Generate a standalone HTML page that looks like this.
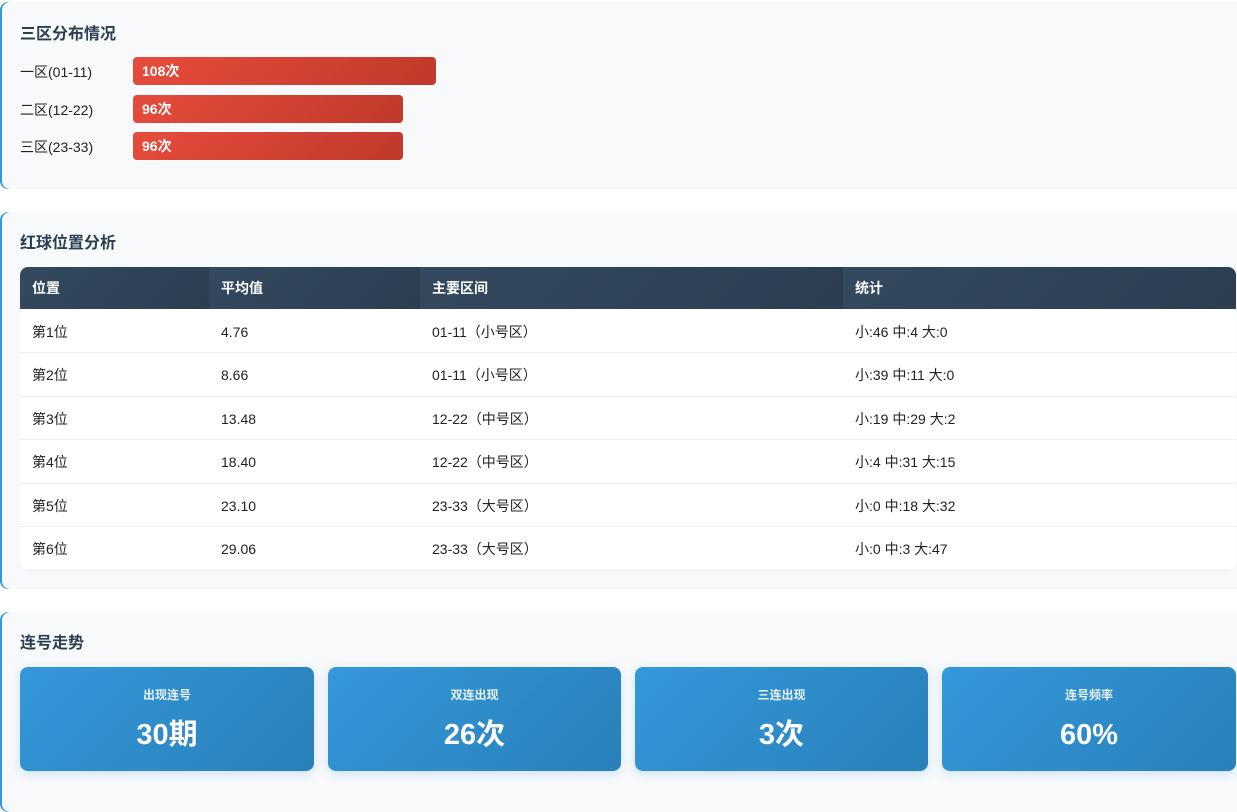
<!DOCTYPE html>
<html><head><meta charset="utf-8">
<style>
*{box-sizing:border-box;margin:0;padding:0}
html,body{width:1237px;height:781px;overflow:hidden;background:#fff;font-family:"Liberation Sans","Noto Sans CJK SC",sans-serif;color:#222}
.panel{position:absolute;left:0;width:1256px;background:#f7f9fb;box-shadow:inset 2px 0 0 #3498db;border-radius:8px}
.h{position:absolute;left:20px;font-size:16px;line-height:20px;font-weight:bold;color:#2c3e50}
.lab{position:absolute;left:20px;font-size:14px;line-height:20px;color:#222}
.bar{position:absolute;left:133px;height:28px;border-radius:4px;background:linear-gradient(135deg,#e74c3c,#c0392b);color:#fff;font-weight:bold;font-size:14px;line-height:28px;padding-left:9px}
table{position:absolute;left:20px;top:55px;width:1216px;border-collapse:collapse;background:#fff;border-radius:8px;overflow:hidden;font-size:14px}
th{height:42px;text-align:left;padding-left:12px;color:#fff;font-size:14px;background:linear-gradient(135deg,#34495e,#2c3e50)}
td{height:43.5px;padding-left:12px;padding-top:2px;border-bottom:1px solid #eceef0}
.card{position:absolute;top:55px;height:104px;border-radius:8px;background:linear-gradient(135deg,#3498db,#2980b9);color:#fff;text-align:center;box-shadow:0 3px 10px rgba(52,152,219,.2)}
.card .l{position:absolute;top:20px;width:100%;font-size:12px;line-height:16px;font-weight:bold;color:#e8f2fa}
.card .v{position:absolute;top:50px;width:100%;font-size:29px;line-height:36px;font-weight:bold}
</style></head><body>
<div class="panel" style="top:2px;height:187px">
 <div class="h" style="top:23px">三区分布情况</div>
 <div class="lab" style="top:60px">一区(01-11)</div>
 <div class="bar" style="top:55px;width:303px">108次</div>
 <div class="lab" style="top:98px">二区(12-22)</div>
 <div class="bar" style="top:93px;width:270px">96次</div>
 <div class="lab" style="top:135px">三区(23-33)</div>
 <div class="bar" style="top:130px;width:270px">96次</div>
</div>
<div class="panel" style="top:212px;height:377px">
 <div class="h" style="top:22px">红球位置分析</div>
 <table>
  <tr><th style="width:189px">位置</th><th style="width:211px">平均值</th><th style="width:423px">主要区间</th><th>统计</th></tr>
  <tr><td>第1位</td><td>4.76</td><td>01-11（小号区）</td><td>小:46 中:4 大:0</td></tr>
  <tr><td>第2位</td><td>8.66</td><td>01-11（小号区）</td><td>小:39 中:11 大:0</td></tr>
  <tr><td>第3位</td><td>13.48</td><td>12-22（中号区）</td><td>小:19 中:29 大:2</td></tr>
  <tr><td>第4位</td><td>18.40</td><td>12-22（中号区）</td><td>小:4 中:31 大:15</td></tr>
  <tr><td>第5位</td><td>23.10</td><td>23-33（大号区）</td><td>小:0 中:18 大:32</td></tr>
  <tr><td>第6位</td><td>29.06</td><td>23-33（大号区）</td><td>小:0 中:3 大:47</td></tr>
 </table>
</div>
<div class="panel" style="top:612px;height:200px">
 <div class="h" style="top:22px">连号走势</div>
 <div class="card" style="left:20px;width:294px"><div class="l">出现连号</div><div class="v">30期</div></div>
 <div class="card" style="left:328px;width:293px"><div class="l">双连出现</div><div class="v">26次</div></div>
 <div class="card" style="left:635px;width:293px"><div class="l">三连出现</div><div class="v">3次</div></div>
 <div class="card" style="left:942px;width:294px"><div class="l">连号频率</div><div class="v">60%</div></div>
</div>
</body></html>
